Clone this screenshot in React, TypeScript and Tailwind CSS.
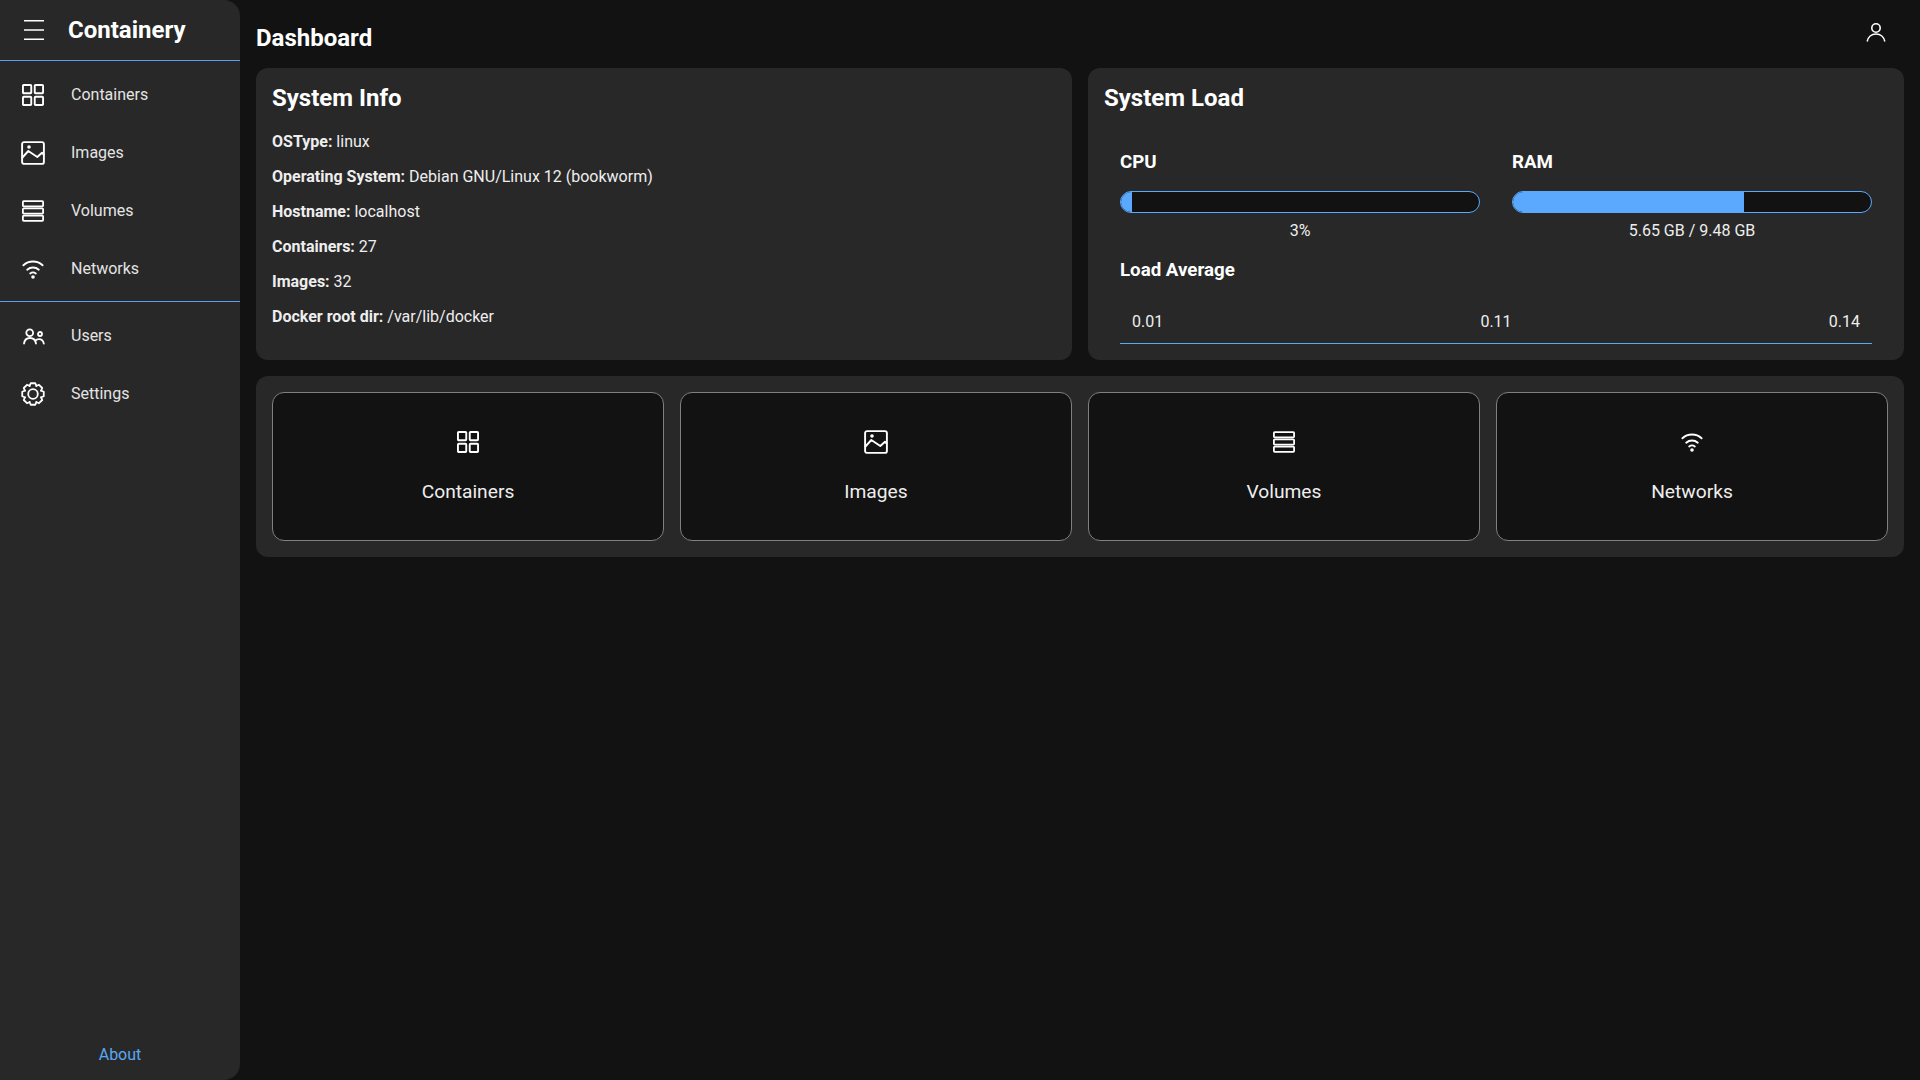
function GridIcon({ className }: { className?: string }) {
  return (
    <svg viewBox="0 0 24 24" fill="none" stroke="currentColor" strokeWidth="1.9" className={className}>
      <rect x="1.95" y="1.95" width="8.3" height="8.3" rx="0.8" />
      <rect x="13.75" y="1.95" width="8.3" height="8.3" rx="0.8" />
      <rect x="1.95" y="13.75" width="8.3" height="8.3" rx="0.8" />
      <rect x="13.75" y="13.75" width="8.3" height="8.3" rx="0.8" />
    </svg>
  );
}

function ImageIcon({ className }: { className?: string }) {
  return (
    <svg viewBox="0 0 24 24" fill="none" stroke="currentColor" strokeWidth="1.9" className={className}>
      <rect x="1.1" y="1.1" width="21.8" height="21.8" rx="2" />
      <circle cx="8" cy="6" r="1.8" fill="currentColor" stroke="none" />
      <path d="M1 17l6.300-7 9 6 4.700-4.300 2 2.300" strokeLinejoin="round" />
    </svg>
  );
}

function StackIcon({ className }: { className?: string }) {
  return (
    <svg viewBox="0 0 24 24" fill="none" stroke="currentColor" strokeWidth="1.8" className={className}>
      <rect x="1.9" y="2.2" width="20.2" height="5.1" rx="0.8" />
      <rect x="1.9" y="9.45" width="20.2" height="5.1" rx="0.8" />
      <rect x="1.9" y="16.7" width="20.2" height="5.1" rx="0.8" />
    </svg>
  );
}

function WifiIcon({ className }: { className?: string }) {
  return (
    <svg viewBox="0 0 24 24" fill="none" stroke="currentColor" strokeWidth="1.9" strokeLinecap="round" className={className}>
      <path d="M2.400 8.300c5.300-5 13.900-5 19.200 0" />
      <path d="M6.200 12.700c3.300-3 8.300-3 11.600 0" />
      <path d="M9.200 16.500c1.600-1.300 4-1.300 5.600 0" />
      <circle cx="12" cy="20" r="1.8" fill="currentColor" stroke="none" />
    </svg>
  );
}

function UsersIcon({ className }: { className?: string }) {
  return (
    <svg viewBox="0 0 24 24" fill="none" stroke="currentColor" strokeWidth="1.8" strokeLinecap="round" className={className}>
      <circle cx="8.700" cy="8.700" r="3.400" />
      <circle cx="19" cy="10" r="2" />
      <path d="M3 19.500c.5-3.500 3-5.500 6-5.500s5.500 2 6 5.500" />
      <path d="M14.500 16.500c1-1 2.300-1.300 3.500-1.300 2.500 0 4.300 1.800 4.800 4.500" />
    </svg>
  );
}

function gearPath() {
  const pt = (deg: number, r: number) => {
    const a = (deg * Math.PI) / 180;
    return `${(12 + r * Math.cos(a)).toFixed(2)} ${(12 + r * Math.sin(a)).toFixed(2)}`;
  };
  let d = "";
  for (let i = 0; i < 8; i++) {
    const c = i * 45 - 90;
    d += `${i === 0 ? "M" : "L"}${pt(c - 24, 8.6)} L${pt(c - 12, 11)} L${pt(c + 12, 11)} L${pt(c + 24, 8.6)} `;
  }
  return d + "Z";
}

function GearIcon({ className }: { className?: string }) {
  return (
    <svg viewBox="0 0 24 24" fill="none" stroke="currentColor" strokeWidth="1.8" strokeLinejoin="round" className={className}>
      <path d={gearPath()} />
      <circle cx="12" cy="12" r="4.800" />
    </svg>
  );
}

const mainNav = [
  { label: "Containers", icon: GridIcon },
  { label: "Images", icon: ImageIcon },
  { label: "Volumes", icon: StackIcon },
  { label: "Networks", icon: WifiIcon },
];

const info = [
  ["OSType:", "linux"],
  ["Operating System:", "Debian GNU/Linux 12 (bookworm)"],
  ["Hostname:", "localhost"],
  ["Containers:", "27"],
  ["Images:", "32"],
  ["Docker root dir:", "/var/lib/docker"],
];

function NavRow({ label, children }: { label: string; children: React.ReactNode }) {
  return (
    <div className="flex h-[58px] items-center pl-[21px] text-[#e4e4e4]">
      <span className="flex w-[50px] shrink-0 text-white">{children}</span>
      <span className="text-base">{label}</span>
    </div>
  );
}

export default function App() {
  return (
    <div className="flex min-h-screen bg-[#121212] font-['Roboto',sans-serif] text-white">
      <aside className="flex h-screen w-[240px] shrink-0 flex-col rounded-r-2xl bg-[#282828]">
        <div className="flex h-[61px] shrink-0 items-center border-b border-[#5aa2e8] pl-6">
          <svg viewBox="0 0 20 20" fill="none" stroke="currentColor" strokeWidth="1.5" className="h-5 w-5">
            <path d="M0 0.800h20M0 10h20M0 19.200h20" />
          </svg>
          <span className="ml-[24px] text-2xl font-bold">Containery</span>
        </div>
        <nav className="border-b border-[#5aa2e8] pt-[5px] pb-[3px]">
          {mainNav.map((item) => (
            <NavRow key={item.label} label={item.label}>
              <item.icon className="h-6 w-6" />
            </NavRow>
          ))}
        </nav>
        <div className="pt-[5px]">
          <NavRow label="Users">
            <UsersIcon className="h-6 w-6" />
          </NavRow>
          <NavRow label="Settings">
            <GearIcon className="h-6 w-6" />
          </NavRow>
        </div>
        <div className="mt-auto pb-[13px] text-center text-base text-[#5aa9f5]">About</div>
      </aside>

      <main className="min-w-0 flex-1 px-4">
        <header className="flex h-[68px] items-center justify-between pt-[8px]">
          <h1 className="text-2xl font-bold">Dashboard</h1>
          <svg viewBox="0 0 24 24" fill="none" stroke="currentColor" strokeWidth="1.6" className="mr-4 mb-[13px] h-6 w-6">
            <circle cx="12" cy="8" r="4.200" />
            <path d="M3.200 21.500C4 17 7.500 14 12 14s8 3 8.800 7.500" />
          </svg>
        </header>

        <div className="grid grid-cols-2 gap-4">
          <section className="h-[292px] rounded-xl bg-[#282828] p-4">
            <h2 className="-mt-px text-2xl leading-[30px] font-bold">System Info</h2>
            <div className="mt-[11px]">
              {info.map(([k, v]) => (
                <p key={k} className="h-[35px] text-base leading-[35px] text-[#eeeeee]">
                  <b className="font-bold">{k}</b> {v}
                </p>
              ))}
            </div>
          </section>

          <section className="h-[292px] rounded-xl bg-[#282828] p-4">
            <h2 className="-mt-px text-2xl leading-[30px] font-bold">System Load</h2>
            <div className="mt-[35px] px-4">
              <div className="grid grid-cols-2 gap-8">
                <div>
                  <h3 className="text-[18.720px] leading-[28px] font-bold">CPU</h3>
                  <div className="mt-[15px] h-[22px] overflow-hidden rounded-xl border border-[#5aa9ff] bg-[#121212]">
                    <div className="h-full w-[3%] bg-[#5aa9ff]" />
                  </div>
                  <p className="mt-[7px] text-center text-base leading-[22px] text-[#eeeeee]">3%</p>
                </div>
                <div>
                  <h3 className="text-[18.720px] leading-[28px] font-bold">RAM</h3>
                  <div className="mt-[15px] h-[22px] overflow-hidden rounded-xl border border-[#5aa9ff] bg-[#121212]">
                    <div className="h-full w-[64.400%] bg-[#5aa9ff]" />
                  </div>
                  <p className="mt-[7px] text-center text-base leading-[22px] text-[#eeeeee]">5.65 GB / 9.48 GB</p>
                </div>
              </div>
              <h3 className="mt-[14px] text-[18.720px] leading-[28px] font-bold">Load Average</h3>
              <div className="mt-[15px] flex h-[45px] items-center justify-between border-b border-[#5aa9f5] px-3 pt-[2px] text-base text-[#eeeeee]">
                <span>0.01</span>
                <span>0.11</span>
                <span>0.14</span>
              </div>
            </div>
          </section>
        </div>

        <section className="mt-4 grid grid-cols-4 gap-4 rounded-xl bg-[#282828] p-4">
          {mainNav.map((item) => (
            <div
              key={item.label}
              className="flex h-[149px] flex-col items-center rounded-xl border border-[#808080] bg-[#121212] pt-[37px]"
            >
              <item.icon className="h-6 w-6 text-white" />
              <span className="mt-[24px] text-[19.200px] leading-[28px] text-[#eeeeee]">{item.label}</span>
            </div>
          ))}
        </section>
      </main>
    </div>
  );
}
